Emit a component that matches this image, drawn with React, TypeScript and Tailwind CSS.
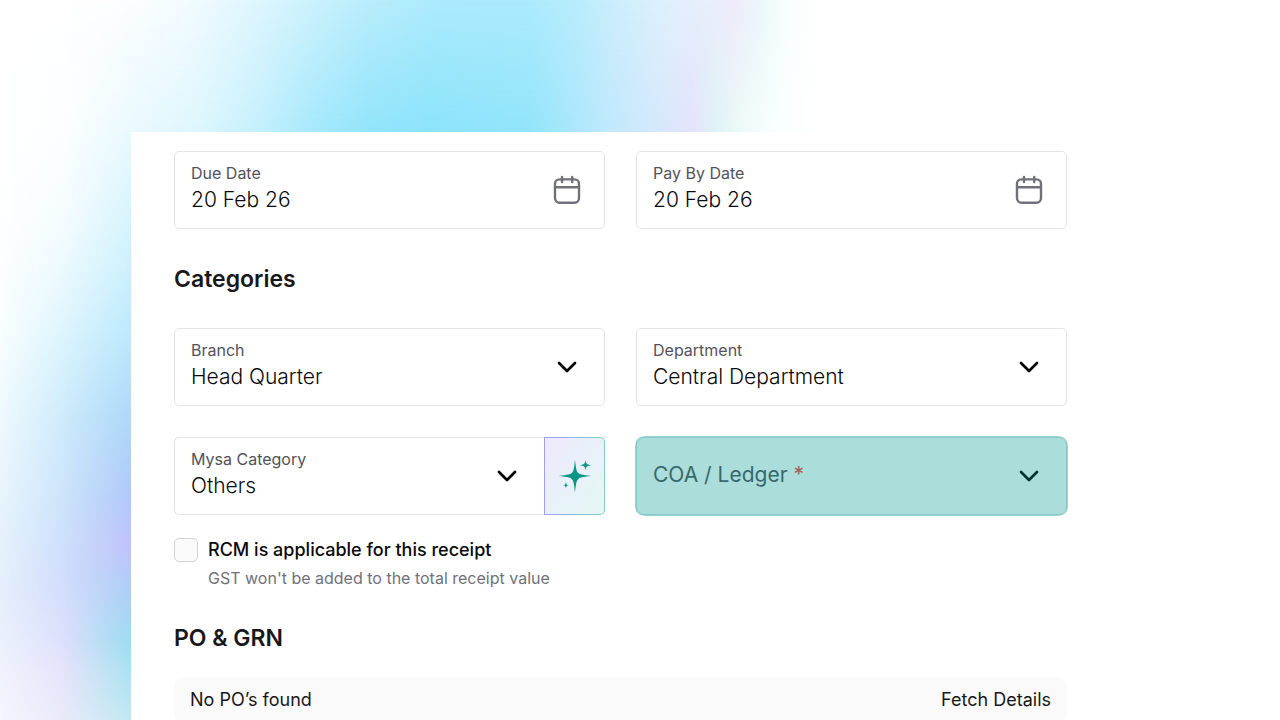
import { useState, type ReactNode } from 'react'
import { ChevronDown } from 'lucide-react'

const fieldBox = 'relative flex h-[78px] items-center border border-[#e4e4e7] bg-white pl-4'
const fieldStack = 'flex min-w-0 flex-1 flex-col pb-1'
const labelText = 'text-base leading-6 text-[#52525b]'
const valueText =
  'w-full appearance-none bg-transparent text-[21px] leading-[30px] font-light text-[#09090b] outline-none'

/** Soft aurora that sits above and to the left of the form panel. */
function AuroraTop() {
  return (
    <div aria-hidden="true" className="relative h-[132px] overflow-hidden">
      <div className="absolute inset-0 bg-[linear-gradient(to_right,#fff_0px,#fefeff_110px,#f5fcff_180px,#e2f7fe_245px,#d0f3fd_300px,#b9edfc_370px,#acebfc_440px,#acebfc_530px,#b8edfc_575px,#cdeefd_615px,#e0f1fc_670px,#e8eefc_708px,#f0eafb_732px,#eaf8fa_762px,#f8fefe_785px,#fff_820px)]" />
      <div className="absolute inset-0 bg-[linear-gradient(to_right,#fff_0px,#fcfeff_65px,#eaf9fe_131px,#dcf6fd_200px,#c4effd_260px,#a5e8fc_315px,#92e4fb_370px,#8be3fb_430px,#92e4fb_530px,#aae6fb_572px,#c0e8fc_610px,#d2e8fc_650px,#e4e2fb_692px,#def2f6_715px,#ebfaf7_738px,#f8fefe_770px,#fff_815px)] [mask-image:linear-gradient(to_bottom,transparent,#000)]" />
    </div>
  )
}

function AuroraSide() {
  return (
    <div aria-hidden="true" className="relative w-[131px] shrink-0 overflow-hidden">
      <div className="absolute inset-0 bg-[linear-gradient(to_bottom,#fff_0px,#fefeff_120px,#f9fefe_200px,#eefafe_284px,#e6f4fd_383px,#e6effc_462px,#f6f6fe_588px)]" />
      <div className="absolute inset-0 bg-[linear-gradient(to_bottom,#fcfeff_0px,#f4fcff_90px,#e5f7fe_166px,#d9f3fd_213px,#cdeafb_284px,#cbe2fb_383px,#d0dcfb_442px,#dadffc_502px,#e5e3fa_541px,#e8eaf9_588px)] [mask-image:linear-gradient(to_right,transparent,#000_50%)]" />
      <div className="absolute inset-0 bg-[linear-gradient(to_bottom,#e8f9fe_0px,#dcf5fd_60px,#cdf1fc_126px,#bbe8fc_205px,#add8f8_284px,#afc8f9_363px,#bfc2fb_415px,#abcff5_462px,#9cdcf0_509px,#abe2f0_540px,#c0e8f2_588px)] [mask-image:linear-gradient(to_right,transparent_50%,#000)]" />
    </div>
  )
}

function CalendarIcon() {
  return (
    <svg width="28" height="30" viewBox="0 0 28 30" fill="none" stroke="#71717a" strokeWidth="2.4" strokeLinecap="round">
      <rect x="2" y="4.4" width="24" height="23.4" rx="4.5" />
      <path d="M2 12.3h24M9 2v5M19.2 2v5" />
    </svg>
  )
}

function SparkleIcon() {
  return (
    <svg width="34" height="34" viewBox="-17 -17 34 34" fill="#0d9585">
      <path d="M0-16.5C1-6.5 1.8-4 3.2-3.2C4-1.8 6.5-1 16.5 0C6.5 1 4 1.8 3.2 3.2C1.8 4 1 6.5 0 16.5C-1 6.5-1.8 4-3.2 3.2C-4 1.8-6.5 1-16.5 0C-6.5-1-4-1.8-3.2-3.2C-1.8-4-1-6.5 0-16.5Z" />
      <path d="M10.5-16.5C10.9-12.5 11.2-11.5 16.5-10.8C11.2-10.1 10.9-9.2 10.5-5C10.1-9.2 9.8-10.1 4.5-10.8C9.8-11.5 10.1-12.5 10.5-16.5Z" />
      <path d="M-9.1 6.2C-8.7 8.4-8.3 8.8-6.2 9.2C-8.3 9.6-8.7 10-9.1 12.2C-9.5 10-9.9 9.6-12 9.2C-9.9 8.8-9.5 8.4-9.1 6.2Z" />
    </svg>
  )
}

function DateField({ id, label, initial }: { id: string; label: string; initial: string }) {
  const [value, setValue] = useState(initial)

  return (
    <div className={`${fieldBox} rounded-[5px] pr-[23px]`}>
      <div className={fieldStack}>
        <label htmlFor={id} className={labelText}>{label}</label>
        <input id={id} value={value} onChange={(e) => setValue(e.target.value)} className={valueText} />
      </div>
      <button type="button" aria-label={`Pick ${label}`} className="shrink-0">
        <CalendarIcon />
      </button>
    </div>
  )
}

function SelectField({
  id,
  label,
  options,
  joined = false,
}: {
  id: string
  label: string
  options: string[]
  joined?: boolean
}) {
  return (
    <div
      className={`${fieldBox} min-w-0 flex-1 pr-[21px] ${joined ? 'rounded-l-[5px] border-r-0' : 'rounded-[5px]'}`}
    >
      <div className={fieldStack}>
        <label htmlFor={id} className={labelText}>{label}</label>
        <select id={id} className={valueText}>
          {options.map((option) => (
            <option key={option}>{option}</option>
          ))}
        </select>
      </div>
      <ChevronDown size={32} className="pointer-events-none shrink-0 text-black" />
    </div>
  )
}

/** Required ledger picker, drawn with a teal highlight while it still needs a value. */
function LedgerField() {
  return (
    <div className={`${fieldBox} rounded-[5px] pr-[21px]`}>
      <label htmlFor="ledger" className="flex-1 pb-0.5 text-[21px] leading-[30px] text-[#52525b]">
        COA / Ledger <span className="text-[#ef4444]">*</span>
      </label>
      <ChevronDown size={32} className="shrink-0 text-black" />
      <div className="pointer-events-none absolute -inset-[2px] rounded-[10px] border-2 border-[#00998e]/10 bg-[#00998e]/33" />
      <select id="ledger" required defaultValue="" className="absolute inset-0 w-full cursor-pointer opacity-0">
        <option value="">Select ledger</option>
      </select>
    </div>
  )
}

function Heading({ children }: { children: ReactNode }) {
  return <h2 className="text-[23px] leading-8 font-semibold text-[#18181b]">{children}</h2>
}

export default function App() {
  const [rcm, setRcm] = useState(false)

  return (
    <div className="flex min-h-screen flex-col bg-white font-['Inter',sans-serif]">
      <AuroraTop />
      <div className="flex flex-1">
        <AuroraSide />
        <main className="min-w-0 flex-1 px-[43px] pt-[19px]">
          <form className="max-w-[893px]">
            <div className="grid grid-cols-2 gap-[31px]">
              <DateField id="due-date" label="Due Date" initial="20 Feb 26" />
              <DateField id="pay-by-date" label="Pay By Date" initial="20 Feb 26" />
            </div>

            <div className="pt-[34px] pb-[33px]">
              <Heading>Categories</Heading>
            </div>
            <div className="grid grid-cols-2 gap-[31px]">
              <SelectField id="branch" label="Branch" options={['Head Quarter']} />
              <SelectField id="department" label="Department" options={['Central Department']} />
              <div className="flex">
                <SelectField id="category" label="Mysa Category" options={['Others']} joined />
                <button
                  type="button"
                  aria-label="Suggest category"
                  className="flex w-[61px] shrink-0 rounded-r-[5px] bg-linear-to-r from-[#a19cf3] to-[#7bd3c2] p-px"
                >
                  <span className="flex flex-1 items-center justify-center rounded-r-[4px] bg-linear-to-br from-[#efe9fc] via-[#e8f1fa] to-[#e4f8f1]">
                    <SparkleIcon />
                  </span>
                </button>
              </div>
              <LedgerField />
            </div>

            <div className="flex gap-[10px] pt-[23px]">
              <input
                id="rcm"
                type="checkbox"
                checked={rcm}
                onChange={(e) => setRcm(e.target.checked)}
                aria-describedby="rcm-hint"
                className="size-6 shrink-0 appearance-none rounded-[5px] border border-[#d4d4d8] bg-[#fafafa] checked:bg-[#0d9585]"
              />
              <div>
                <label htmlFor="rcm" className="block text-lg leading-6 font-medium text-[#09090b]">
                  RCM is applicable for this receipt
                </label>
                <p id="rcm-hint" className="pt-1 text-base leading-6 text-[#71717a]">
                  GST won't be added to the total receipt value
                </p>
              </div>
            </div>

            <div className="pt-8 pb-[23px]">
              <Heading>PO &amp; GRN</Heading>
            </div>
            <div className="flex h-[46px] items-center justify-between rounded-[10px] bg-[#fafafa] px-4 text-lg text-[#18181b]">
              <span>No PO’s found</span>
              <button type="button">Fetch Details</button>
            </div>
          </form>
        </main>
      </div>
    </div>
  )
}
